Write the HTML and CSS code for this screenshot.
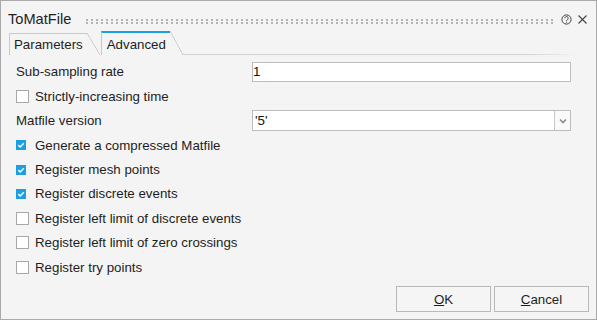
FILE: index.html
```html
<!DOCTYPE html>
<html lang="en">
<head>
  <meta charset="UTF-8">
  <title>ToMatFile</title>
  <link rel="stylesheet" href="styles.css">
</head>
<body>
  <div class="dialog">
    <div class="titlebar">
      <span class="title">ToMatFile</span>
      <span class="grip"></span>
      <svg class="help" width="11" height="11" viewBox="0 0 11 11">
        <circle cx="5.5" cy="5.5" r="4.6" fill="none" stroke="#444" stroke-width="1"/>
        <path d="M3.8 4.3 A1.7 1.7 0 1 1 6.4 5.7 C5.8 6.1 5.5 6.4 5.5 7" fill="none" stroke="#444" stroke-width="1"/>
        <rect x="5" y="7.7" width="1" height="1" fill="#444"/>
      </svg>
      <svg class="close" width="9" height="9" viewBox="0 0 9 9">
        <path d="M0.5 0.5 L8.5 8.5 M8.5 0.5 L0.5 8.5" stroke="#444" stroke-width="1.1"/>
      </svg>
    </div>

    <div class="tabs">
      <div class="tab">Parameters</div>
      <div class="tab active">Advanced</div>
      <div class="tab-rest"></div>
    </div>

    <div class="form">
      <span class="field-label">Sub-sampling rate</span>
      <div class="textbox">1</div>

      <label class="check"><span class="box"></span>Strictly-increasing time</label>

      <span class="field-label">Matfile version</span>
      <div class="combo">
        <span class="combo-value">'5'</span>
        <span class="combo-btn">
          <svg width="8" height="6" viewBox="0 0 8 6"><path d="M1 1.5 L4 4.5 L7 1.5" fill="none" stroke="#8a8a8a" stroke-width="1.6"/></svg>
        </span>
      </div>

      <label class="check"><span class="box on"><svg width="10" height="10" viewBox="0 0 10 10"><path d="M2.3 5.1 L4.2 7 L7.8 3.2" fill="none" stroke="#fff" stroke-width="1.5"/></svg></span>Generate a compressed Matfile</label>
      <label class="check"><span class="box on"><svg width="10" height="10" viewBox="0 0 10 10"><path d="M2.3 5.1 L4.2 7 L7.8 3.2" fill="none" stroke="#fff" stroke-width="1.5"/></svg></span>Register mesh points</label>
      <label class="check"><span class="box on"><svg width="10" height="10" viewBox="0 0 10 10"><path d="M2.3 5.1 L4.2 7 L7.8 3.2" fill="none" stroke="#fff" stroke-width="1.5"/></svg></span>Register discrete events</label>
      <label class="check"><span class="box"></span>Register left limit of discrete events</label>
      <label class="check"><span class="box"></span>Register left limit of zero crossings</label>
      <label class="check"><span class="box"></span>Register try points</label>
    </div>

    <div class="buttons">
      <button type="button"><u>O</u>K</button>
      <button type="button"><u>C</u>ancel</button>
    </div>
  </div>
</body>
</html>
```

FILE: styles.css
```css
body { margin: 0; font-family: "Liberation Sans", Arial, sans-serif; font-size: 13.3px; color: #1e1e1e; background: #f4f4f4; }
.dialog { width: 597px; height: 320px; box-sizing: border-box; border: 1px solid #a9a9a9; background: #f4f4f4; display: flex; flex-direction: column; }

/* title bar */
.titlebar { height: 30px; box-sizing: border-box; padding: 6px 9px 0 7px; display: flex; align-items: center; }
.title { font-size: 14.6px; color: #222; }
.grip { flex: 1; align-self: flex-start; height: 5px; margin: 12px 8px 0 15px;
  background-image: linear-gradient(to right, #b3b3b3 2px, transparent 2px), linear-gradient(to right, #b3b3b3 2px, transparent 2px);
  background-size: 5px 2px, 5px 2px; background-position: 0 0, 0 3px; background-repeat: repeat-x; }
.help { margin-right: 6px; }

/* tabs */
.tabs { height: 24px; display: flex; align-items: flex-end; padding-left: 8px; }
.tab { position: relative; height: 22px; box-sizing: border-box; border-left: 1px solid #c9c9c9; border-top: 1px solid #c9c9c9; padding: 0 4px; margin-right: 14px; display: flex; align-items: center; }
.tab::after { content: ""; position: absolute; left: 100%; top: -1px; width: 13px; height: calc(100% + 1px);
  background: linear-gradient(to top right, transparent calc(50% - 0.7px), #c4c4c4 50%, transparent calc(50% + 0.7px)); }
.tab.active { height: 24px; border-top: 2px solid #1ba1e2; padding: 0 4px 0 5px; margin-right: 13px; }
.tab.active::after { top: -2px; height: calc(100% + 2px); }
.tab-rest { flex: 1; height: 1px; margin-right: 19px; background: linear-gradient(to right, #d2d2d2 88%, rgba(210,210,210,0)); }

/* form */
.form { display: grid; grid-template-columns: 236px 1fr; grid-auto-rows: 24.4px; align-items: center; padding: 4.8px 25px 0 15px; }
.check { grid-column: 1 / -1; display: flex; align-items: center; }
.box { width: 13px; height: 13px; box-sizing: border-box; border: 1px solid #a8a8a8; background: #fff; margin-right: 6px; }
.box.on { width: 10px; height: 10px; border: none; background: #1a9fe0; margin-right: 9px; display: flex; }
.textbox { height: 20px; box-sizing: border-box; border: 1px solid #bdbdbd; background: #fff; line-height: 18px; color: #111; }
.combo { height: 21px; box-sizing: border-box; border: 1px solid #bdbdbd; background: #fff; display: flex; }
.combo-value { flex: 1; padding-left: 2px; line-height: 19px; color: #111; }
.combo-btn { width: 15px; border-left: 1px solid #c8c8c8; background: #fafafa; display: flex; align-items: center; justify-content: center; }

/* buttons */
.buttons { margin-top: auto; display: flex; justify-content: flex-end; gap: 3px; padding: 0 7px 7px 0; }
.buttons button { width: 95px; height: 26px; border: 1px solid #b9b9b9; border-radius: 0; background: #f5f5f5; font-family: "Liberation Sans", Arial, sans-serif; font-size: 13.3px; color: #1e1e1e; padding: 0; }
```
